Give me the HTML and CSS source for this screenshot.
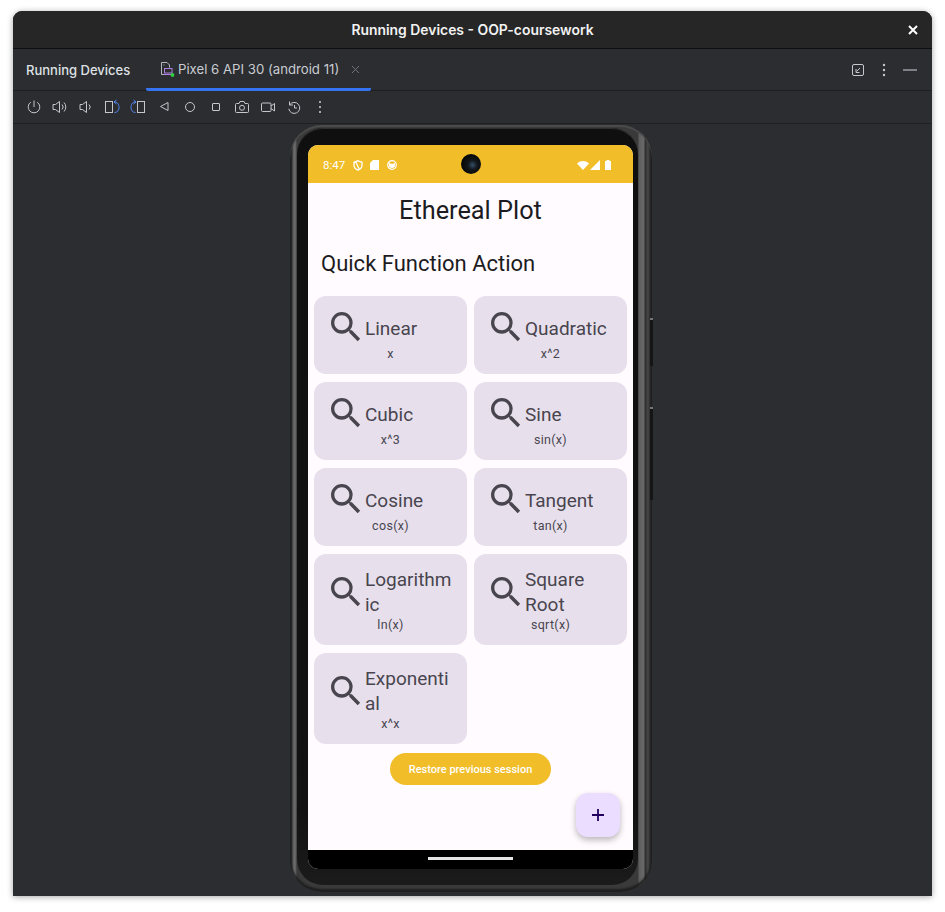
FILE: index.html
```html
<!DOCTYPE html>
<html>
<head>
    <title>Running Devices - OOP-coursework</title>
    <link rel="stylesheet" href="styles.css">
</head>
<body>
    <svg class="defs" width="0" height="0">
        <symbol id="search" viewBox="0 0 24 24">
            <path d="M15.5 14h-.79l-.28-.27A6.47 6.47 0 0 0 16 9.5 6.5 6.5 0 1 0 9.5 16c1.61 0 3.09-.59 4.23-1.57l.27.28v.79l5 4.99L20.49 19l-4.99-5zm-6 0C7.01 14 5 11.99 5 9.5S7.01 5 9.5 5 14 7.010 14 9.5 11.990 14 9.500 14z"/>
        </symbol>
    </svg>
    <div class="window">
        <header class="titlebar">
            <span class="title">Running Devices - OOP-coursework</span>
            <svg class="close" width="10" height="10" viewBox="0 0 10 10"><path d="M1 1l8 8M9 1l-8 8"/></svg>
        </header>
        <div class="tabs">
            <span class="tool-name">Running Devices</span>
            <div class="tab">
                <svg width="14" height="15" viewBox="0 0 14 15" fill="none">
                    <path d="M3.500 12.500H.5V.5h5.500l2.500 2.500v2.500" stroke="#b4b8bf"/>
                    <path d="M2.500 3h1" stroke="#b4b8bf"/>
                    <rect x="3.500" y="6.500" width="7.500" height="4.500" stroke="#b080e0"/>
                    <path d="M3 12.500h8" stroke="#b080e0"/>
                    <circle cx="11.500" cy="13" r="1.900" fill="#2fd03f"/>
                </svg>
                <span>Pixel 6 API 30 (android 11)</span>
                <svg class="tab-x" width="9" height="9" viewBox="0 0 9 9"><path d="M1 1l7 7M8 1l-7 7"/></svg>
            </div>
            <div class="tab-actions">
                <svg width="14" height="14" viewBox="0 0 14 14" fill="none" stroke="#c4c7cc"><rect x="1.500" y="1.500" width="11" height="11" rx="1.500"/><path d="M9 5L5.500 8.500M5 6v3.500h3.500"/></svg>
                <svg width="4" height="14" viewBox="0 0 4 14" fill="#c4c7cc"><circle cx="2" cy="2" r="1.200"/><circle cx="2" cy="7" r="1.200"/><circle cx="2" cy="12" r="1.200"/></svg>
                <svg width="14" height="14" viewBox="0 0 14 14" stroke="#9a9da3" stroke-width="1.500"><path d="M0 7h14"/></svg>
            </div>
        </div>
        <div class="toolbar">
            <svg viewBox="0 0 16 16"><path d="M8 1.500v6.500M4.800 3.200a5.800 5.800 0 1 0 6.400 0"/></svg>
            <svg viewBox="0 0 16 16"><path d="M1 5.500v5h2.500L7.500 13.500v-11L3.500 5.500zM10 5.500a3.500 3.500 0 0 1 0 5M12 3.500a6.500 6.500 0 0 1 0 9"/></svg>
            <svg viewBox="0 0 16 16"><path d="M2 5.500v5h2.500L8.500 13.500v-11L4.500 5.500zM11 5.500a3.500 3.500 0 0 1 0 5"/></svg>
            <svg viewBox="0 0 16 16"><rect x="1.500" y="2.500" width="7" height="11"/><path class="blue" d="M10.500 3C14 3 15 6 15 8.500s-1.500 5-4.500 5M12.500 1L10 3l2.500 2"/></svg>
            <svg viewBox="0 0 16 16"><rect x="7.500" y="2.500" width="7" height="11"/><path class="blue" d="M5.500 3C2 3 1 6 1 8.500s1.500 5 4.500 5M3.500 1L6 3 3.500 5"/></svg>
            <svg viewBox="0 0 16 16"><path d="M12 3.500v8L4.500 7.500z"/></svg>
            <svg viewBox="0 0 16 16"><circle cx="8" cy="8" r="4.500"/></svg>
            <svg viewBox="0 0 16 16"><rect x="4.500" y="4.500" width="7" height="7" rx=".5"/></svg>
            <svg viewBox="0 0 16 16"><path d="M2.500 4.500H5l1-2h4l1 2h2.500a1 1 0 0 1 1 1v7a1 1 0 0 1-1 1h-11a1 1 0 0 1-1-1v-7a1 1 0 0 1 1-1z"/><circle cx="8" cy="8.800" r="2.500"/></svg>
            <svg viewBox="0 0 16 16"><rect x="1.500" y="4" width="9.500" height="8.500" rx="1"/><path d="M11 7l3.500-2.500v7.500L11 9.500"/></svg>
            <svg viewBox="0 0 16 16"><path d="M3.500 2.500v3.500H7M3.700 5.800a5.500 5.500 0 1 1-.9 4M8.500 6v3H11"/></svg>
            <svg viewBox="0 0 16 16" class="dots"><circle cx="8" cy="3" r="1.100"/><circle cx="8" cy="8" r="1.100"/><circle cx="8" cy="13" r="1.100"/></svg>
        </div>
        <main class="stage">
            <div class="phone">
                <span class="side-btn power"></span>
                <span class="side-btn volume"></span>
                <div class="bezel">
                    <div class="screen">
                        <div class="statusbar">
                            <div class="status-left">
                                <span>8:47</span>
                                <svg width="10" height="11" viewBox="0 0 10 11" fill="none" stroke="#fff" stroke-width="1.300"><path d="M5 .8l4 1.500v3C9 8 7 9.500 5 10.200 3 9.500 1 8 1 5.300v-3zM2.800 2l3.400 7"/></svg>
                                <svg width="9" height="10" viewBox="0 0 9 10" fill="#fff"><path d="M3 0h6v10H0V3z"/></svg>
                                <svg width="10" height="10" viewBox="0 0 10 10" fill="none" stroke="#fff" stroke-width="1.200"><circle cx="5" cy="5" r="4.300"/><path d="M2 2.800l1.500 1h3l1.500-1v2.700a3 2.500 0 0 1-6 0z" fill="#fff" stroke="none"/></svg>
                            </div>
                            <div class="camera"></div>
                            <div class="status-right">
                                <svg width="12" height="9" viewBox="0 0 12 9" fill="#fff"><path d="M0 2.500C3.500-.8 8.500-.8 12 2.500L6 9z"/></svg>
                                <svg width="10" height="10" viewBox="0 0 10 10" fill="#fff"><path d="M10 0v10H0z"/></svg>
                                <svg class="battery" width="6" height="10" viewBox="0 0 6 10" fill="#fff"><path d="M1.500 1V0h3v1H6v9H0V1z"/></svg>
                            </div>
                        </div>
                        <div class="app">
                            <h1>Ethereal Plot</h1>
                            <h2>Quick Function Action</h2>
                            <div class="cards">
                                <div class="card">
                                    <div class="card-top"><svg class="icon"><use href="#search"/></svg><span class="name">Linear</span></div>
                                    <div class="formula">x</div>
                                </div>
                                <div class="card">
                                    <div class="card-top"><svg class="icon"><use href="#search"/></svg><span class="name">Quadratic</span></div>
                                    <div class="formula">x^2</div>
                                </div>
                                <div class="card">
                                    <div class="card-top"><svg class="icon"><use href="#search"/></svg><span class="name">Cubic</span></div>
                                    <div class="formula">x^3</div>
                                </div>
                                <div class="card">
                                    <div class="card-top"><svg class="icon"><use href="#search"/></svg><span class="name">Sine</span></div>
                                    <div class="formula">sin(x)</div>
                                </div>
                                <div class="card">
                                    <div class="card-top"><svg class="icon"><use href="#search"/></svg><span class="name">Cosine</span></div>
                                    <div class="formula">cos(x)</div>
                                </div>
                                <div class="card">
                                    <div class="card-top"><svg class="icon"><use href="#search"/></svg><span class="name">Tangent</span></div>
                                    <div class="formula">tan(x)</div>
                                </div>
                                <div class="card tall">
                                    <div class="card-top"><svg class="icon"><use href="#search"/></svg><span class="name">Logarithm<br>ic</span></div>
                                    <div class="formula">ln(x)</div>
                                </div>
                                <div class="card tall">
                                    <div class="card-top"><svg class="icon"><use href="#search"/></svg><span class="name">Square<br>Root</span></div>
                                    <div class="formula">sqrt(x)</div>
                                </div>
                                <div class="card tall">
                                    <div class="card-top"><svg class="icon"><use href="#search"/></svg><span class="name">Exponenti<br>al</span></div>
                                    <div class="formula">x^x</div>
                                </div>
                            </div>
                            <div class="restore-row"><button class="restore">Restore previous session</button></div>
                            <button class="fab">
                                <svg width="14" height="14" viewBox="0 0 14 14" stroke="#21005d" stroke-width="1.800"><path d="M7 1v12M1 7h12"/></svg>
                            </button>
                        </div>
                        <div class="navbar"><span class="home-pill"></span></div>
                    </div>
                </div>
            </div>
        </main>
    </div>
</body>
</html>
```

FILE: styles.css
```css
* { box-sizing: border-box; }
html, body { height: 100%; }
body {
    margin: 0;
    padding: 11px 13px 16px;
    background-color: #fff;
    font-family: "Inter", "Liberation Sans", sans-serif;
    overflow: hidden;
}
.defs { position: absolute; }

.window {
    height: 885px;
    display: flex;
    flex-direction: column;
    background-color: #2b2d30;
    border-radius: 9px 9px 0 0;
    box-shadow: 0 1px 6px rgba(0, 0, 0, 0.35);
    overflow: hidden;
}

.titlebar {
    height: 38px;
    flex: none;
    display: flex;
    align-items: center;
    justify-content: center;
    position: relative;
    background-color: #262626;
    border-bottom: 1px solid #0f0f0f;
}
.title {
    color: #f2f2f2;
    font-size: 13.900px;
    font-weight: 600;
}
.close {
    position: absolute;
    right: 14px;
    top: 14px;
    fill: none;
    stroke: #fff;
    stroke-width: 2;
}

.tabs {
    height: 42px;
    flex: none;
    display: flex;
    align-items: center;
    padding-left: 13px;
    border-bottom: 1px solid #1e1f22;
    color: #dfe1e5;
    font-size: 13px;
}
.tool-name { font-weight: 500; width: 120px; }
.tab {
    height: 42px;
    width: 225px;
    display: flex;
    align-items: center;
    gap: 3px;
    padding: 2px 0 0 15px;
    border-bottom: 3px solid #3574f0;
    border-radius: 0 0 2px 2px;
    color: #c9ccd2;
    font-size: 13.200px;
}
.tab-x {
    margin-left: 9px;
    fill: none;
    stroke: #6f737a;
}
.tab-actions {
    margin-left: auto;
    display: flex;
    align-items: center;
    gap: 17px;
    padding-right: 15px;
}

.toolbar {
    height: 33px;
    flex: none;
    display: flex;
    align-items: center;
    gap: 10px;
    padding-left: 13px;
    border-bottom: 1px solid #1e1f22;
}
.toolbar svg {
    width: 16px;
    height: 16px;
    fill: none;
    stroke: #c4c7cc;
    stroke-width: 1;
}
.toolbar .blue { stroke: #548af7; }
.toolbar .dots { fill: #c4c7cc; stroke: none; }

.stage {
    flex: 1;
    display: flex;
    justify-content: center;
    align-items: flex-start;
    padding: 1px 3px 0 0;
}

/* the grey band only shows down the long sides, top and bottom stay dark */
.phone {
    width: 362px;
    height: 767px;
    padding: 3px 14px 7px 7px;
    position: relative;
    border-radius: 32px;
    background: linear-gradient(90deg,
        #1c1d1f 0, #2e2e2e 2px, #5a5a5a 3px, #707070 5px, #3a3a3a 7px,
        #3a3a3a 348px, #5e5e5e 349px, #6a6a6a 354px, #2c2c2c 355px,
        #484848 358px, #2a2a2a 360px, #1c1d1f 362px);
    box-shadow: inset 0 2px 0 #4a4a4a, inset 0 -3px 2px #1f1f1f;
}
.side-btn {
    position: absolute;
    right: -1px;
    width: 3px;
    background-color: #151515;
    border-top: 2px solid #777;
}
.power { top: 193px; height: 48px; }
.volume { top: 282px; height: 93px; }

.bezel {
    height: 100%;
    padding: 17px 5px 16px 11px;
    background: linear-gradient(#0f0f0f, #121212 90%, #1b1b1b);
    border-radius: 26px;
    box-shadow: inset 0 1px 0 #2e2e2e;
}

.screen {
    height: 100%;
    display: flex;
    flex-direction: column;
    background-color: #fffbfe;
    border-radius: 10px;
    overflow: hidden;
    font-family: "Roboto", "Liberation Sans", sans-serif;
}

.statusbar {
    height: 38px;
    flex: none;
    display: flex;
    align-items: center;
    justify-content: space-between;
    padding: 2px 22px 0 15px;
    position: relative;
    background-color: #f1bd29;
    color: #fff;
    font-size: 11.500px;
}
.status-left { display: flex; align-items: center; gap: 7.500px; }
.status-right { display: flex; align-items: center; gap: 1px; }
.status-right .battery { margin-left: 4px; }
.camera {
    position: absolute;
    left: 153px;
    top: 9px;
    width: 20px;
    height: 20px;
    border-radius: 50%;
    background: radial-gradient(circle at 58% 55%, #34506a 0, #14181c 28%, #060606 70%);
}

.app {
    flex: 1;
    position: relative;
    padding: 0 6px;
}
h1 {
    margin: 0;
    padding-top: 12px;
    height: 52px;
    text-align: center;
    color: #1c1b1f;
    font-size: 25.300px;
    font-weight: 400;
    line-height: 32px;
}
h2 {
    margin: 0;
    padding: 15px 0 0 7px;
    height: 61px;
    color: #1c1b1f;
    font-size: 22px;
    font-weight: 400;
    line-height: 28px;
}
.cards {
    display: grid;
    grid-template-columns: 153px 153px;
    grid-template-rows: 78px 78px 78px 91px 91px;
    gap: 8px 7px;
}
.card {
    padding: 20px 0 0 12px;
    background-color: #e7e0ec;
    border-radius: 12px;
    color: #49454f;
}
.card-top {
    display: flex;
    align-items: flex-start;
}
.icon {
    width: 40px;
    height: 40px;
    flex: none;
    margin: -9px -1px 0 0;
    fill: #49454f;
}
.name {
    font-size: 19px;
    line-height: 25px;
}
.tall .card-top { margin-top: -7px; }
.tall .icon { margin-top: 5px; }
.formula {
    margin: -1px 0 0 -12px;
    text-align: center;
    font-size: 12.500px;
    letter-spacing: 0.3px;
    line-height: 16px;
}
.tall .formula { margin-top: 0; }

.restore-row {
    display: flex;
    justify-content: center;
    padding-top: 9px;
}
.restore {
    width: 161px;
    height: 32px;
    border: 0;
    border-radius: 16px;
    background-color: #f1bd29;
    color: #fff;
    font-family: inherit;
    font-size: 11px;
    font-weight: 500;
}
.fab {
    position: absolute;
    right: 13px;
    bottom: 13px;
    width: 44px;
    height: 44px;
    border: 0;
    border-radius: 12px;
    display: flex;
    align-items: center;
    justify-content: center;
    background-color: #eaddff;
    box-shadow: 0 3px 6px rgba(0, 0, 0, 0.28);
}

.navbar {
    height: 19px;
    flex: none;
    display: flex;
    justify-content: center;
    padding-top: 7px;
    background-color: #000;
}
.home-pill {
    width: 85px;
    height: 3px;
    background-color: #e6e6e6;
}
```
